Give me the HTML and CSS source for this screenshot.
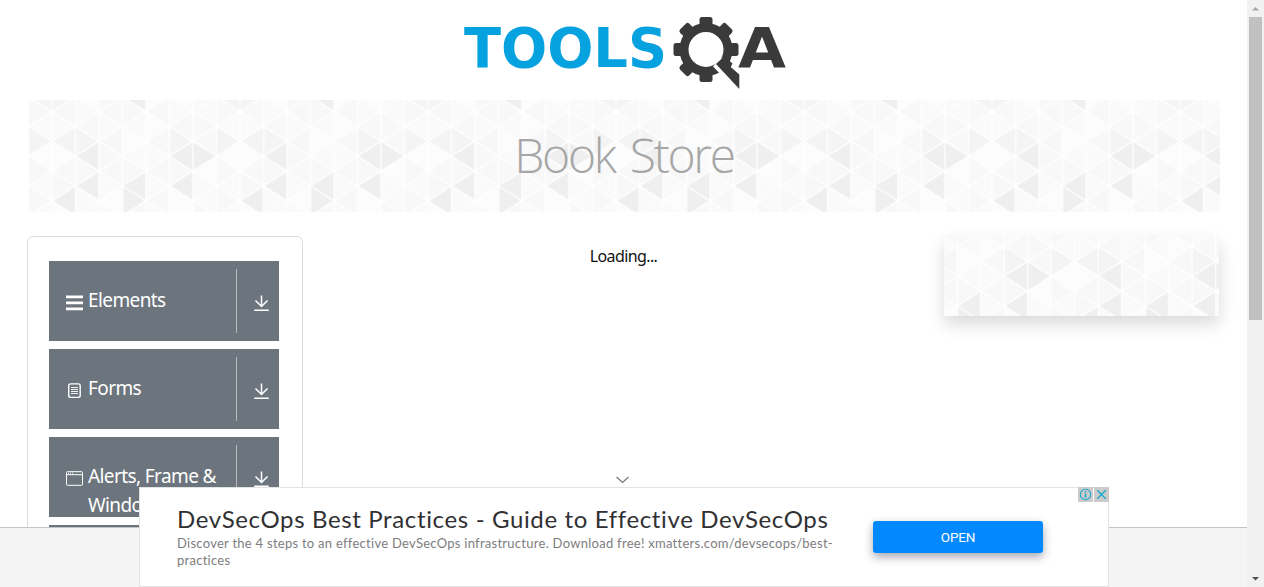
FILE: index.html
```html
<!DOCTYPE html>
<html lang="en">
<head>
<meta charset="utf-8">
<title>ToolsQA</title>
<link rel="stylesheet" href="styles.css">
</head>
<body>
<div class="window">
  <div class="page">
    <header class="header">
      <svg class="logo" width="330" height="80" viewBox="460 12 330 80">
        <text class="logo-tools" x="464" y="67" textLength="203" lengthAdjust="spacingAndGlyphs">TOOLS</text>
        <g class="gear" transform="translate(706 49.5)">
          <circle r="22" fill="none" stroke="#3a3a3b" stroke-width="9"/>
          <g id="teeth">
            <path id="tooth" d="M-6.5-23V-30Q-6.5-32.5-4-32.5H4Q6.500-32.500 6.500-30V-23z"/>
            <use href="#tooth" transform="rotate(45)"/><use href="#tooth" transform="rotate(90)"/>
            <use href="#tooth" transform="rotate(180)"/><use href="#tooth" transform="rotate(225)"/>
            <use href="#tooth" transform="rotate(270)"/><use href="#tooth" transform="rotate(315)"/>
            <use href="#tooth" transform="rotate(135)"/>
          </g>
          <path fill="#fff" d="M7 17L17 7L35 23V46z"/>
          <path d="M17.500 6L26.500 14L23.500 20L14.500 11z"/>
          <path d="M10 14.500L15.500 9.500L33.300 25V39.500z"/>
        </g>
        <text class="logo-a" x="738" y="67" textLength="48" lengthAdjust="spacingAndGlyphs">A</text>
      </svg>
    </header>

    <section class="banner">
      <svg class="mosaic" width="1192" height="112">
        <defs>
          <pattern id="triangles" x="0.5" y="-3.300" width="188" height="240" patternUnits="userSpaceOnUse">
            <rect width="188" height="240" fill="#fbfbfb"/>
            <g transform="scale(23.500 14.870)" stroke="#fff" stroke-width="1.300" stroke-linejoin="round">
              <g fill="#fafafa">
                <path vector-effect="non-scaling-stroke" d="M0 2l1-1v2zM0 6l1-1v2zM1 1v2l1-1zM2 0v2l1-1zM2 6v2l1-1zM3 1v2l1-1zM3 5v2l1-1zM4 2l1-1v2zM4 4l1-1v2zM5 3v2l1-1zM5 5v2l1-1zM6 0v2l1-1zM7 1l1-1v2zM7 5v2l1-1zM7 7l1-1v2zM0 8l1-1v2zM2 8l1-1v2zM3 7v2l1-1zM5 7v2l1-1zM7-1v2l1-1z"/>
              </g>
              <g fill="#fcfcfc">
                <path vector-effect="non-scaling-stroke" d="M0 4l1-1v2zM1 3v2l1-1zM3 7l1-1v2zM4 2v2l1-1zM5 1v2l1-1zM6 8l1-1v2zM6 6v2l1-1zM7 5l1-1v2zM1 7v2l1-1zM2 0l1-1v2zM5-1v2l1-1zM6 0l1-1v2z"/>
              </g>
              <g fill="#f8f8f8">
                <path vector-effect="non-scaling-stroke" d="M0 0v2l1-1zM0 4v2l1-1zM0 6v2l1-1zM1 1l1-1v2zM1 5l1-1v2zM1 5v2l1-1zM2 2l1-1v2zM2 4v2l1-1zM3 1l1-1v2zM3 5l1-1v2zM3 3v2l1-1zM4 0v2l1-1zM4 4v2l1-1zM5 1l1-1v2zM5 3l1-1v2zM5 5l1-1v2zM5 7l1-1v2zM6 2l1-1v2zM6 4v2l1-1zM7 3l1-1v2zM7 1v2l1-1zM3-1v2l1-1zM4 8l1-1v2zM7 7v2l1-1z"/>
              </g>
              <g fill="#f4f4f4">
                <path vector-effect="non-scaling-stroke" d="M0 2v2l1-1zM0 0l1-1v2zM1 3l1-1v2zM1-1v2l1-1zM2 2v2l1-1zM6 2v2l1-1z"/>
              </g>
              <g fill="#f7f7f7">
                <path vector-effect="non-scaling-stroke" d="M3 3l1-1v2z"/>
              </g>
              <g fill="#efefef">
                <path vector-effect="non-scaling-stroke" d="M1 7l1-1v2zM2 4l1-1v2zM2 6l1-1v2zM4 0l1-1v2zM4 6l1-1v2zM4 6v2l1-1zM6 4l1-1v2zM6 6l1-1v2zM7 3v2l1-1z"/>
              </g>
            </g>
          </pattern>
        </defs>
        <rect width="1192" height="112" fill="url(#triangles)"/>
      </svg>
      <h1 class="title">Book Store</h1>
    </section>

    <div class="columns">
      <nav class="menu">
        <div class="item">
          <div class="label">
            <svg class="icon" width="18" height="18" viewBox="0 0 18 18"><path fill="#fff" d="M1 1.500h17v2.700h-17zM1 7.600h17v2.700h-17zM1 13.500h17v2.700h-17z"/></svg>
            <span>Elements</span>
          </div>
          <div class="toggle"><svg width="16" height="18" viewBox="0 0 16 18" fill="none" stroke="#fff" stroke-width="1.500"><path d="M7.500.5v10.500M1.500 5.500l6 6 6-6M.2 15.200h14.600"/></svg></div>
        </div>
        <div class="item">
          <div class="label">
            <svg class="icon" width="18" height="18" viewBox="0 0 18 18" fill="none" stroke="#fff"><rect x="3.700" y="1.900" width="11.500" height="13.500" rx="1.800" stroke-width="1.400"/><path stroke-width=".9" d="M6 5.500h7M6 7.500h7M6 9.500h7M6 11.500h7"/></svg>
            <span>Forms</span>
          </div>
          <div class="toggle"><svg width="16" height="18" viewBox="0 0 16 18" fill="none" stroke="#fff" stroke-width="1.500"><path d="M7.500.5v10.500M1.500 5.500l6 6 6-6M.2 15.200h14.600"/></svg></div>
        </div>
        <div class="item">
          <div class="label">
            <svg class="icon" width="18" height="18" viewBox="0 0 18 18" fill="none" stroke="#fff"><rect x="1.500" y="1.700" width="16" height="13.600" rx=".8"/><path d="M1.500 4.700h16M3 3.200h1M5 3.200h1M7 3.200h1"/></svg>
            <span>Alerts, Frame &amp; Windows</span>
          </div>
          <div class="toggle"><svg width="16" height="18" viewBox="0 0 16 18" fill="none" stroke="#fff" stroke-width="1.500"><path d="M7.500.5v10.500M1.500 5.500l6 6 6-6M.2 15.200h14.600"/></svg></div>
        </div>
        <div class="item"></div>
      </nav>
      <main class="content">Loading...</main>
      <aside class="card">
        <svg class="mosaic" width="275" height="80" viewBox="81.300 16 275 80"><rect x="81" y="16" width="276" height="80" fill="url(#triangles)"/></svg>
      </aside>
    </div>

    <div class="anchor">
      <svg class="collapse" width="16" height="10" viewBox="0 0 16 10" fill="none" stroke="#777" stroke-width="1.200"><path d="M1.500 2l6 5.500L13.500 2"/></svg>
      <div class="ad">
        <div class="ad-copy">
          <div class="ad-title">DevSecOps Best Practices - Guide to Effective DevSecOps</div>
          <div class="ad-text"><span class="ad-line">Discover the 4 steps to an effective DevSecOps infrastructure. Download free! xmatters.com/devsecops/best-</span><br><span class="ad-line">practices</span></div>
        </div>
        <div class="ad-button">OPEN</div>
        <div class="ad-badges">
          <svg width="15" height="15" viewBox="0 0 15 15" fill="none" stroke="#18a9cc"><rect width="15" height="15" fill="#cbcbcb" stroke="none"/><circle cx="7.500" cy="7.500" r="5.200" stroke-width="1.100"/><path stroke-width="1.500" d="M7.500 6.500v4.300M7.500 4v1.500"/></svg>
          <svg width="15" height="15" viewBox="0 0 15 15" fill="none" stroke="#18a9cc"><rect width="15" height="15" fill="#cbcbcb" stroke="none"/><path stroke-width="1.400" d="M3.300 3.300l8.400 8.400M11.700 3.300l-8.400 8.400"/></svg>
        </div>
      </div>
    </div>
  </div>

  <div class="scrollbar">
    <svg width="17" height="17" viewBox="0 0 17 17"><path fill="#a3a3a3" d="M5 10.500h7L8.500 7z"/></svg>
    <div class="thumb"></div>
    <svg class="down" width="17" height="17" viewBox="0 0 17 17"><path fill="#505050" d="M5 7h7l-3.500 3.500z"/></svg>
  </div>
</div>
</body>
</html>
```

FILE: styles.css
```css
* { box-sizing: border-box; }
body { margin: 0; background: #fff; font: 16px/24px "Noto Sans", sans-serif; color: #212529; }
.window { display: grid; grid-template-columns: 1247px 17px; height: 587px; overflow: hidden; }
.page { position: relative; height: 587px; overflow: hidden; padding: 0 27px 0 28px; }
.header { display: flex; justify-content: center; height: 100px; padding: 12px 0 8px; }
.logo { display: block; margin-left: 1px; }
.logo text { font: 700 56px "DejaVu Sans", sans-serif; }
.logo-tools { fill: #06a2e0; }
.logo-a, .gear { fill: #3a3a3b; }
.banner { display: grid; width: 1192px; height: 112px; place-items: center; }
.banner > * { grid-area: 1 / 1; }
.mosaic { display: block; }
.title { margin: 0; padding-bottom: 2px; font: 300 48px/58px "Open Sans", sans-serif; color: #a6a6a6; letter-spacing: -2.300px; word-spacing: 5px; white-space: nowrap; }
.columns { display: grid; grid-template-columns: 276px 641px 275px; margin: 24px 0 0 -1px; align-items: start; }
.menu { display: grid; gap: 8px; height: 420px; padding: 24px 23px 0 21px; border: 1px solid #dcdcdc; border-radius: 6px; align-content: start; }
.item { display: grid; grid-template-columns: 188px 1fr; height: 80px; background: #6c757d; color: #fff; font-size: 19px; line-height: 29px; }
.label { display: grid; grid-template-columns: 18px 1fr; column-gap: 5px; margin: 8px 0; padding: 17px 0 0 16px; border-right: 1px solid #bbb; }
.icon { margin-top: 8px; }
.label span { letter-spacing: -.600px; }
.toggle { padding: 34px 0 0 17px; line-height: 0; }
.content { padding-top: 8px; text-align: center; color: #111; letter-spacing: -.600px; }
.card { height: 80px; box-shadow: 0 8px 16px rgba(0,0,0,.15); }

.anchor { position: absolute; left: 0; right: 0; bottom: 0; height: 60px; background: #f4f4f4; border-top: 1px solid #c4c4c4; }
.collapse { position: absolute; left: 615px; top: -53px; }
.ad { position: absolute; left: 139px; bottom: 0; width: 970px; height: 100px; display: grid; grid-template-columns: 696px 170px; padding-left: 37px; background: #fff; border: 1px solid #e3e3e3; font-family: Lato, sans-serif; }
.ad-copy { padding-top: 16px; white-space: nowrap; }
.ad-title { height: 31px; font-size: 24px; line-height: 29px; color: #303033; letter-spacing: .640px; }
.ad-text { font-size: 13px; line-height: 17px; color: #7d7d80; letter-spacing: .270px; }
.ad-button { height: 32px; margin-top: 33px; border-radius: 3px; background: #0288ff; box-shadow: 0 4px 10px rgba(40,45,70,.42); color: #fff; font: 400 13.500px/32px Roboto, sans-serif; letter-spacing: -.200px; text-align: center; }
.ad-badges { position: absolute; right: -1px; top: -1px; display: flex; gap: 1px; }

.scrollbar { display: flex; flex-direction: column; align-items: center; background: #f1f1f1; }
.thumb { width: 13px; height: 303px; background: #c1c1c1; }
.down { margin-top: auto; }
```
